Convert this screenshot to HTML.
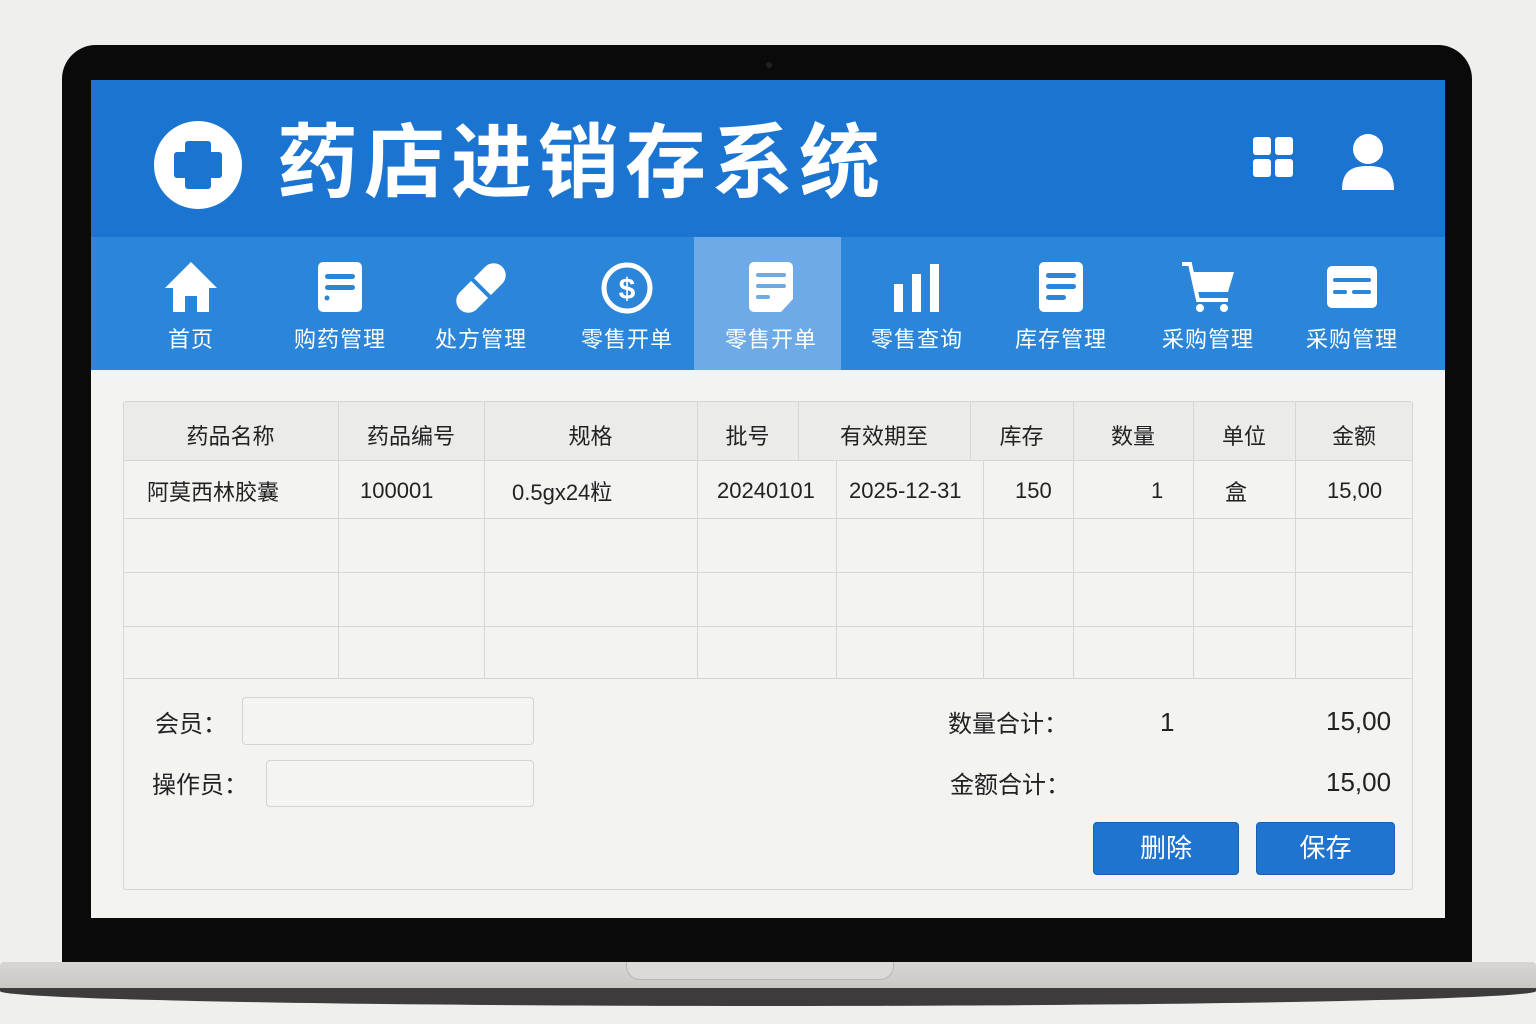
<!DOCTYPE html>
<html><head><meta charset="utf-8"><style>
*{margin:0;padding:0;box-sizing:border-box}
body{width:1536px;height:1024px;background:#efefed;position:relative;overflow:hidden;font-family:"Liberation Sans","Noto Sans CJK SC",sans-serif}
.a{position:absolute}
.bezel{left:62px;top:45px;width:1410px;height:925px;background:#0a0a0a;border-radius:34px 34px 0 0}
.screen{left:91px;top:80px;width:1354px;height:838px;background:#f3f3f2;overflow:hidden}
.hdr{left:0;top:0;width:1354px;height:157px;background:#1b74d0}
.nav{left:0;top:157px;width:1354px;height:133px;background:#2b85d9}
.act{left:603px;top:157px;width:147px;height:133px;background:#6eaae5}
.ni{position:absolute;top:178px;width:140px;text-align:center}
.ni svg{display:block;margin:0 auto;height:56px}
.ni span{display:block;color:#fff;font-size:22px;margin-top:8px;letter-spacing:1px}
.t{color:#222;font-size:22px;position:absolute;text-align:center}
.vl{position:absolute;width:1px;background:#d6d6d6}
.hl{position:absolute;height:1px;background:#d6d6d6;left:123px;width:1290px}
.btn{position:absolute;background:#1f74d0;color:#fff;font-size:26px;text-align:center;border-radius:4px;border:1px solid #1560b3}
.in{position:absolute;border:1px solid #d4d4d4;border-radius:4px;background:#f4f4f3}
</style></head><body>
<div class="a bezel"></div>
<div class="a" style="left:766px;top:62px;width:6px;height:6px;border-radius:3px;background:#222"></div>
<div class="a screen">
 <div class="a hdr"></div>
 <div class="a" style="left:63px;top:41px;width:88px;height:88px;border-radius:50%;background:#fff"></div>
 <div class="a" style="left:94px;top:61px;width:26px;height:48px;background:#1b74d0;border-radius:3px"></div>
 <div class="a" style="left:83px;top:72px;width:48px;height:26px;background:#1b74d0;border-radius:3px"></div>
 <div class="a" style="left:186px;top:34px;color:#fff;font-size:81px;font-weight:bold;letter-spacing:6px;line-height:100px">药店进销存系统</div>
 <svg class="a" style="left:1162px;top:57px" width="42" height="42"><rect x="0" y="0" width="18" height="18" rx="3" fill="#fff"/><rect x="22" y="0" width="18" height="18" rx="3" fill="#fff"/><rect x="0" y="22" width="18" height="18" rx="3" fill="#fff"/><rect x="22" y="22" width="18" height="18" rx="3" fill="#fff"/></svg>
 <svg class="a" style="left:1250px;top:52px" width="54" height="58"><circle cx="27" cy="17" r="15" fill="#fff"/><path d="M1 58 C1 38 12 34 27 34 C42 34 53 38 53 58Z" fill="#fff"/></svg>
 <div class="a nav"></div>
 <div class="a act"></div>
</div>
<div class="ni" style="left:121px;top:258px"><svg viewBox="0 0 56 56" width="56"><path d="M28 4 L2 30 H10 V54 H22 V38 H34 V54 H46 V30 H54Z" fill="#fff"/></svg><span>首页</span></div>
<div class="ni" style="left:270px;top:258px"><svg viewBox="0 0 56 56" width="56"><rect x="6" y="4" width="44" height="50" rx="5" fill="#fff"/><rect x="13" y="16" width="30" height="5" rx="2.5" fill="#2b85d9"/><rect x="13" y="27" width="30" height="5" rx="2.5" fill="#2b85d9"/><circle cx="15" cy="40" r="2.5" fill="#2b85d9"/></svg><span>购药管理</span></div>
<div class="ni" style="left:411px;top:258px"><svg viewBox="0 0 56 56" width="56"><rect x="16" y="0" width="24" height="60" rx="12" fill="#fff" transform="rotate(45 28 30)"/><line x1="12" y1="28" x2="42" y2="28" stroke="#2b85d9" stroke-width="4" transform="rotate(45 28 30) translate(0 2)"/></svg><span>处方管理</span></div>
<div class="ni" style="left:557px;top:258px"><svg viewBox="0 0 56 56" width="56"><circle cx="28" cy="30" r="23" fill="none" stroke="#fff" stroke-width="5"/><text x="28" y="41" text-anchor="middle" font-size="30" font-weight="bold" fill="#fff" font-family="Liberation Sans">$</text></svg><span>零售开单</span></div>
<div class="ni" style="left:701px;top:258px"><svg viewBox="0 0 56 56" width="56"><path d="M6 9 a5 5 0 0 1 5 -5 h34 a5 5 0 0 1 5 5 v32 l-12 13 h-27 a5 5 0 0 1 -5 -5Z" fill="#fff"/><rect x="13" y="15" width="30" height="4" rx="2" fill="#6eaae5"/><rect x="13" y="26" width="30" height="4" rx="2" fill="#6eaae5"/><rect x="13" y="37" width="14" height="4" rx="2" fill="#6eaae5"/></svg><span>零售开单</span></div>
<div class="ni" style="left:847px;top:258px"><svg viewBox="0 0 56 56" width="56"><rect x="5" y="26" width="9" height="28" fill="#fff"/><rect x="23" y="16" width="9" height="38" fill="#fff"/><rect x="41" y="6" width="9" height="48" fill="#fff"/></svg><span>零售查询</span></div>
<div class="ni" style="left:991px;top:258px"><svg viewBox="0 0 56 56" width="56"><rect x="6" y="4" width="44" height="50" rx="5" fill="#fff"/><rect x="13" y="15" width="30" height="5" rx="2.5" fill="#2b85d9"/><rect x="13" y="26" width="30" height="5" rx="2.5" fill="#2b85d9"/><rect x="13" y="37" width="20" height="5" rx="2.5" fill="#2b85d9"/></svg><span>库存管理</span></div>
<div class="ni" style="left:1138px;top:258px"><svg viewBox="0 0 56 56" width="56"><path d="M2 6 H10 L18 42 H48" fill="none" stroke="#fff" stroke-width="4"/><path d="M13 14 H54 L48 34 H17Z" fill="#fff"/><circle cx="20" cy="50" r="4" fill="#fff"/><circle cx="44" cy="50" r="4" fill="#fff"/></svg><span>采购管理</span></div>
<div class="ni" style="left:1282px;top:258px"><svg viewBox="0 0 56 56" width="56"><rect x="3" y="8" width="50" height="42" rx="5" fill="#fff"/><rect x="9" y="20" width="38" height="4" rx="2" fill="#2b85d9"/><rect x="9" y="32" width="14" height="4" rx="2" fill="#2b85d9"/><rect x="28" y="32" width="19" height="4" rx="2" fill="#2b85d9"/></svg><span>采购管理</span></div>

<div class="a" style="left:123px;top:401px;width:1290px;height:489px;border:1px solid #d6d6d6;border-radius:3px"></div>
<div class="a" style="left:124px;top:402px;width:1288px;height:58px;background:#ebebea"></div>
<div class="hl" style="top:460px"></div><div class="hl" style="top:518px"></div><div class="hl" style="top:572px"></div><div class="hl" style="top:626px"></div><div class="hl" style="top:678px"></div>
<div class="vl" style="left:338px;top:401px;height:277px"></div>
<div class="vl" style="left:484px;top:401px;height:277px"></div>
<div class="vl" style="left:697px;top:401px;height:277px"></div>
<div class="vl" style="left:798px;top:401px;height:59px"></div>
<div class="vl" style="left:970px;top:401px;height:59px"></div>
<div class="vl" style="left:836px;top:460px;height:218px"></div>
<div class="vl" style="left:983px;top:460px;height:218px"></div>
<div class="vl" style="left:1073px;top:401px;height:277px"></div>
<div class="vl" style="left:1193px;top:401px;height:277px"></div>
<div class="vl" style="left:1295px;top:401px;height:277px"></div>
<div class="t" style="left:123px;width:215px;top:419px">药品名称</div>
<div class="t" style="left:338px;width:146px;top:419px">药品编号</div>
<div class="t" style="left:484px;width:213px;top:419px">规格</div>
<div class="t" style="left:697px;width:101px;top:419px">批号</div>
<div class="t" style="left:798px;width:172px;top:419px">有效期至</div>
<div class="t" style="left:970px;width:103px;top:419px">库存</div>
<div class="t" style="left:1073px;width:120px;top:419px">数量</div>
<div class="t" style="left:1193px;width:102px;top:419px">单位</div>
<div class="t" style="left:1295px;width:118px;top:419px">金额</div>
<div class="t" style="left:147px;top:475px">阿莫西林胶囊</div>
<div class="t" style="left:360px;top:478px">100001</div>
<div class="t" style="left:512px;top:475px">0.5gx24粒</div>
<div class="t" style="left:717px;top:478px">20240101</div>
<div class="t" style="left:849px;top:478px">2025-12-31</div>
<div class="t" style="left:1015px;top:478px">150</div>
<div class="t" style="left:1151px;top:478px">1</div>
<div class="t" style="left:1225px;top:475px">盒</div>
<div class="t" style="left:1327px;top:478px">15,00</div>
<div class="t" style="left:155px;top:704px;font-size:24px">会员：</div>
<div class="in" style="left:242px;top:697px;width:292px;height:48px"></div>
<div class="t" style="left:152px;top:765px;font-size:24px">操作员：</div>
<div class="in" style="left:266px;top:760px;width:268px;height:47px"></div>
<div class="t" style="left:948px;top:704px;font-size:24px">数量合计：</div>
<div class="t" style="left:1160px;top:707px;font-size:26px">1</div>
<div class="t" style="left:1326px;top:706px;font-size:26px">15,00</div>
<div class="t" style="left:950px;top:765px;font-size:24px">金额合计：</div>
<div class="t" style="left:1326px;top:767px;font-size:26px">15,00</div>
<div class="btn" style="left:1093px;top:822px;width:146px;height:53px;line-height:51px">删除</div>
<div class="btn" style="left:1256px;top:822px;width:139px;height:53px;line-height:51px">保存</div>

<div class="a" style="left:0;top:962px;width:1536px;height:28px;background:linear-gradient(#d8d6d4,#c9c6c4);border-radius:4px 4px 0 0"></div>
<div class="a" style="left:626px;top:962px;width:268px;height:18px;background:#dcdad8;border-radius:0 0 14px 14px;border:1px solid #b8b6b4;border-top:none"></div>
<div class="a" style="left:0;top:988px;width:1536px;height:18px;background:#3d3b3b;border-radius:0 0 60% 60%/0 0 100% 100%"></div>
</body></html>
